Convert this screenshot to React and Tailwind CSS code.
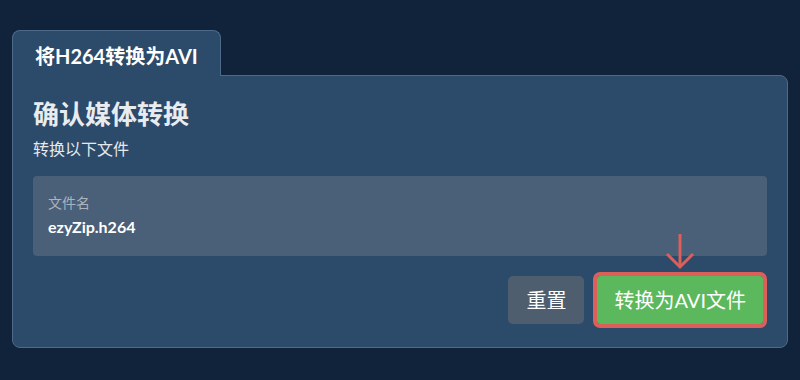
import React from "react";

export default function App() {
  const font = { fontFamily: 'Lato, "Noto Sans CJK SC", sans-serif' };
  return (
    <div className="w-[800px] h-[380px] bg-[#10233a] pt-[30px] px-[12px]" style={font}>
      <div className="flex flex-col">
        <div className="self-start relative z-10 -mb-px bg-[#2c4a6a] border border-b-0 border-[#4e6a8a] rounded-t-lg px-[22px] pt-[15px] pb-[10px]">
          <div className="text-[20px] leading-[20px] font-bold text-white">将H264转换为AVI</div>
        </div>
        <div className="bg-[#2c4a6a] border border-[#4e6a8a] rounded-b-lg rounded-tr-lg pl-[20px] pr-[20px] pt-[25px] pb-[23px]">
          <div className="text-[26px] leading-[26px] font-bold text-[#e9ecef]">确认媒体转换</div>
          <div className="mt-[14px] text-[16px] leading-[16px] text-[#e6e9ec]">转换以下文件</div>
          <div className="mt-[19px] bg-[#4a5f78] rounded px-[15px] pt-[20px] pb-[21px]">
            <div className="text-[14px] leading-[14px] text-[#aab4bf]">文件名</div>
            <div className="mt-[9px] text-[16px] leading-[16px] font-bold text-white">ezyZip.h264</div>
          </div>
          <div className="mt-[20px] flex justify-end items-center gap-[13px] pr-[4px]">
            <button className="h-[48px] px-[18px] rounded-[5px] bg-[#4f5e6f] text-white text-[20px] leading-[20px]">重置</button>
            <div className="relative">
              <svg className="absolute left-1/2 -translate-x-1/2 top-[-44px]" width="30" height="38" viewBox="0 0 30 38" fill="none">
                <line x1="15" y1="2" x2="15" y2="35" stroke="#dc5f5a" strokeWidth="3" />
                <polyline points="2,22 15,35 28,22" stroke="#dc5f5a" strokeWidth="3" fill="none" />
              </svg>
              <button className="h-[48px] px-[17px] rounded-[3px] bg-[#5cb85c] text-white text-[20px] leading-[20px] outline-4 outline-solid outline-[#dc5f5a]">转换为AVI文件</button>
            </div>
          </div>
        </div>
      </div>
    </div>
  );
}
